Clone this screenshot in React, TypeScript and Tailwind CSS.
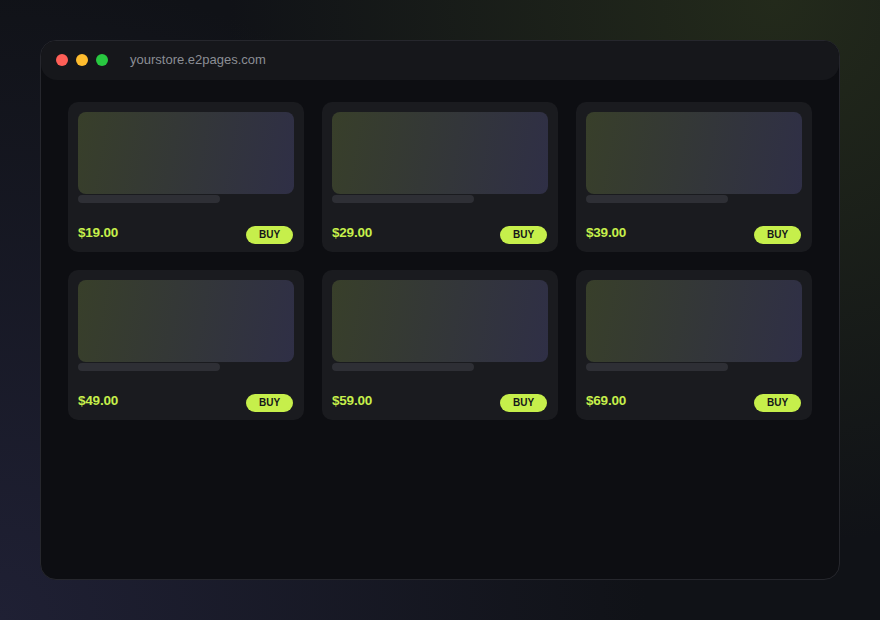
const products = [
  { price: "$19.00" },
  { price: "$29.00" },
  { price: "$39.00" },
  { price: "$49.00" },
  { price: "$59.00" },
  { price: "$69.00" },
];

function ProductCard({ price }: { price: string }) {
  return (
    <div className="h-[150px] rounded-[10px] bg-[#1a1b1f] px-[10px] pt-[10px] pb-2 flex flex-col">
      <div className="h-[82px] rounded-lg bg-linear-[100deg] from-[#383f2a] to-[#2f2f46]" />
      <div className="mt-px h-2 w-[142px] rounded-full bg-[#2e2f35]" />
      <div className="mt-auto flex items-center justify-between pr-px">
        <span className="pb-1 text-[13.5px] font-bold text-[#c6ef4b] leading-none tracking-[-0.2px]">{price}</span>
        <button className="h-[18px] w-[47px] rounded-full bg-[#c6ef4b] text-[10px] font-semibold text-[#15161a] leading-none">
          BUY
        </button>
      </div>
    </div>
  );
}

export default function App() {
  return (
    <div
      className="w-[880px] h-[620px] bg-[#101217] bg-[radial-gradient(circle_at_88%_0%,#232a1b_0%,transparent_55%),radial-gradient(circle_at_0%_100%,#1f2034_0%,transparent_60%)] p-10"
      style={{ fontFamily: '"Liberation Sans", Arial, sans-serif' }}
    >
      <div className="h-[540px] rounded-2xl border border-[#26272d] bg-[#0d0e12] overflow-hidden flex flex-col">
        <div className="-mt-px h-10 shrink-0 rounded-2xl bg-[#16171b] flex items-center pl-[15px]">
          <div className="flex gap-2">
            <span className="h-3 w-3 rounded-full bg-[#ff5f57]" />
            <span className="h-3 w-3 rounded-full bg-[#febc2e]" />
            <span className="h-3 w-3 rounded-full bg-[#28c840]" />
          </div>
          <span className="ml-[22px] text-[13px] text-[#8b8e95]">yourstore.e2pages.com</span>
        </div>
        <div className="grid grid-cols-3 gap-[18px] px-[27px] pt-[22px]">
          {products.map((p) => (
            <ProductCard key={p.price} price={p.price} />
          ))}
        </div>
      </div>
    </div>
  );
}
